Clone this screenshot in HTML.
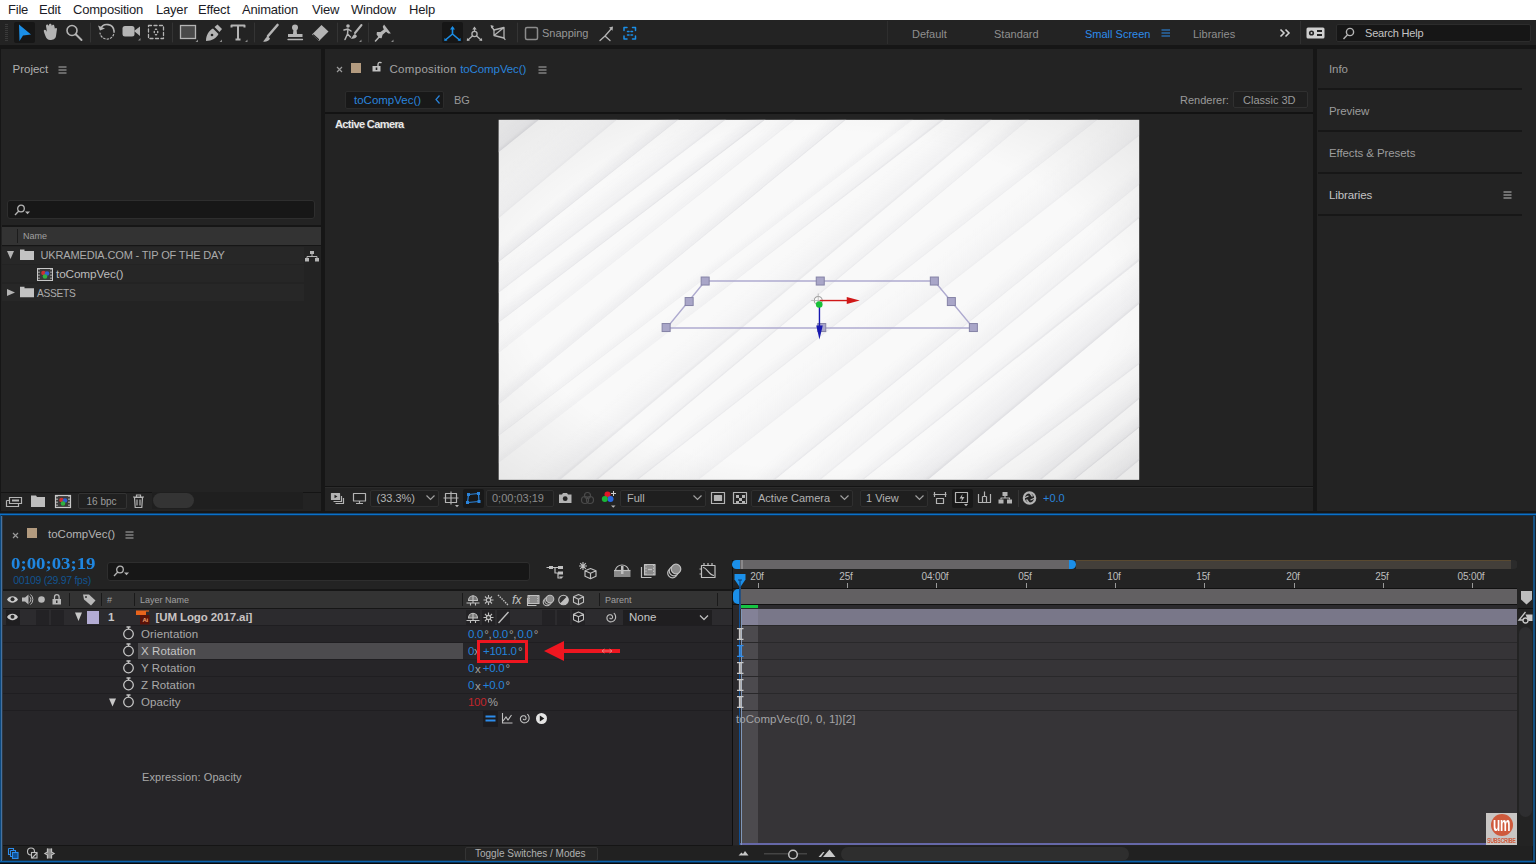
<!DOCTYPE html>
<html><head><meta charset="utf-8"><title>toCompVec()</title>
<style>
*{box-sizing:border-box;margin:0;padding:0}
html,body{width:1536px;height:864px;overflow:hidden;background:#161616}
body{font-family:"Liberation Sans",sans-serif;font-size:11px;color:#a7a7a7;position:relative}
.a{position:absolute}
.t{position:absolute;white-space:nowrap;line-height:1}
svg{position:absolute;overflow:visible}
#menu{left:0;top:0;width:1536px;height:20px;background:#fff}
#menu .t{top:3px;font-size:13px;color:#1b1b26;letter-spacing:-0.2px}
#tool{left:0;top:20px;width:1536px;height:25px;background:#232323}
.pn{background:#232323}
.bl{color:#2d8ceb}
.pr{font-size:11px;color:#ababab;letter-spacing:-0.150px}
.dd{top:441px;height:17px;background:#1f1f1f;border:1px solid #2f2f2f;border-radius:2px}
.ft{top:443.500px;font-size:11px;color:#b2b2b2}
.rp{font-size:11.500px;color:#9c9c9c;letter-spacing:-0.100px}
.rl{left:1px;width:204px;height:2px;background:#171717}
.pn2{font-size:11.500px;color:#a9a9a9;letter-spacing:0.100px}
.vl{font-size:11.500px;letter-spacing:-0.300px}
.sc{display:inline-block;width:8.200px;text-align:center;font-style:normal}
.ws{top:9px;font-size:11px;color:#8f8f8f}
.ws.bl{color:#2d8ceb}
</style></head><body>
<!-- MENU -->
<div id="menu" class="a">
<span class="t" style="left:8px">File</span><span class="t" style="left:39px">Edit</span><span class="t" style="left:73px">Composition</span><span class="t" style="left:156px">Layer</span><span class="t" style="left:198px">Effect</span><span class="t" style="left:242px">Animation</span><span class="t" style="left:312px">View</span><span class="t" style="left:351px">Window</span><span class="t" style="left:409px">Help</span>
</div>
<!-- TOOLBAR -->
<div id="tool" class="a">
<div class="a" style="left:5px;top:4px;width:3px;height:18px;background:repeating-linear-gradient(#3a3a3a 0 1px,transparent 1px 2px)"></div>
<div class="a" style="left:14px;top:2px;width:21px;height:21px;background:#161616;border-radius:2px"></div>
<svg style="left:0;top:0" width="700" height="25" viewBox="0 20 700 25" fill="none" stroke="#b4b4b4" stroke-width="1.6" stroke-linecap="round" stroke-linejoin="round">
<!-- selection arrow -->
<path d="M19 24.5 L31 34.5 L23 35.5 L19.5 41 Z" fill="#1b8fe8" stroke="none"/>
<!-- hand -->
<path d="M44 32 C43 29 46 29 47 32 L46 26 C46 24 48.5 24 48.5 26 L49 25 C49 23.3 51.5 23.3 51.5 25 L52 26 C52 24.3 54.3 24.3 54.3 26 L55 29 C55 27.5 57 27.5 57 29 L56 36 C55.5 39 53 40 50 40 C47 40 45.5 37 44 32 Z" fill="#b4b4b4" stroke="none"/>
<!-- zoom -->
<circle cx="72" cy="30.5" r="5"/><path d="M76 34.5 L81.5 40" stroke-width="2"/>
<path d="M90.5 23 V42 M172.5 23 V42 M254.5 23 V42 M337.5 23 V42 M368.5 23 V42 M517.5 23 V42" stroke="#343434" stroke-width="1"/>
<!-- rotate -->
<path d="M100.5 29 A7 7 0 0 1 114 31" /><path d="M98 25.5 L100 30.5 L105 28.5 Z" fill="#b4b4b4" stroke="none"/><path d="M114 31 A7 7 0 0 1 100 33" stroke-dasharray="1.5 2" stroke-width="1.2"/>
<!-- camera -->
<rect x="122.5" y="26" width="12" height="10.5" rx="2.5" fill="#b4b4b4" stroke="none"/><path d="M134 31 L140 26.5 V36 Z" fill="#b4b4b4" stroke="none"/><path d="M138 40.5 L140.5 38 V40.5 Z" fill="#8a8a8a" stroke="none"/>
<!-- pan behind -->
<rect x="148.500" y="25.500" width="15" height="13" stroke-dasharray="3 2.5" stroke-width="1.3"/><path d="M153 32 l2 -1.5 v3 Z M159 32 l-2 -1.500 v3 Z M156 28 l-1.5 2 h3 Z M156 36 l-1.5 -2 h3 Z" fill="#b4b4b4" stroke="none"/>
<!-- rect -->
<rect x="180.500" y="25.500" width="15" height="13" fill="#4a4a4a" stroke-width="1.300" stroke-linejoin="miter"/><path d="M195.500 42 L198 39.500 V42 Z M219.500 42 L222 39.500 V42 Z M245 42 L247.500 39.500 V42 Z M359 42 L361.500 39.500 V42 Z M391 42 L393.500 39.500 V42 Z" fill="#8a8a8a" stroke="none"/>
<!-- pen -->
<path d="M206 41 C206 35 209 30.500 213 28.500 L218.500 34 C216.500 38 212 41 206 41 Z M206.500 40.500 L211.500 35.500" fill="#b4b4b4" stroke="none"/><path d="M214.500 27 L217.500 24.500 L222 29 L219.500 32 Z" fill="#b4b4b4" stroke="none"/><circle cx="212" cy="35" r="1.300" fill="#232323" stroke="none"/>
<!-- T -->
<path d="M231.500 27.500 V25.500 H244.500 V27.500 M238 25.500 V39.500 M235.500 39.500 H240.500" stroke-width="2" stroke-linecap="butt"/>
<!-- brush -->
<path d="M277.500 25 L268 36" stroke-width="2.600"/><path d="M262.500 41.500 C265 41 265 37 268 36.500 L270 38.500 C269.500 41 266 42 262.500 41.500 Z" fill="#b4b4b4" stroke="none"/>
<!-- stamp -->
<circle cx="295" cy="27.500" r="3" fill="#b4b4b4" stroke="none"/><path d="M293.500 29 L293 34 H288 V37 H302.500 V34 H297 L296.500 29 Z" fill="#b4b4b4" stroke="none"/><path d="M288 39.500 H302.500" stroke-width="1.300"/>
<!-- eraser -->
<path d="M321.500 25 L328.500 31.500 L319 41 L312 34.500 Z" fill="#b4b4b4" stroke="none"/><path d="M313.500 35 L318.500 39.500" stroke="#232323" stroke-width="1.300"/>
<!-- roto -->
<circle cx="348" cy="26" r="1.800" fill="#b4b4b4" stroke="none"/><path d="M344 30 L348 29 L351 31 M348 29 L347.500 34 L345 39.500 M347.500 34 L350.500 37" stroke-width="1.500"/><path d="M361.500 25 L355 33" stroke-width="2"/><path d="M350.500 38.500 C352.500 38 352.500 35 355 34 L357 36 C356.500 38 353.500 39.500 350.500 38.500 Z" fill="#b4b4b4" stroke="none"/>
<!-- pin -->
<path d="M383 24.500 L391 32.500 L388.500 33 L386 31.500 L383 35 L382.500 38.500 L380 38.500 L377 35.500 L377 33 L380.500 32.500 L383.500 29.500 L382 27 Z" fill="#b4b4b4" stroke="none" transform="rotate(8 384 32)"/><path d="M380 36 L375.500 41" stroke-width="1.600"/>
</svg>
<div class="a" style="left:442px;top:2px;width:21px;height:21px;background:#161616;border-radius:2px"></div>
<svg style="left:0;top:0" width="700" height="25" viewBox="0 20 700 25" fill="none" stroke="#b4b4b4" stroke-width="1.300" stroke-linecap="round" stroke-linejoin="round">
<!-- axis local -->
<g stroke="#1b8fe8" fill="#1b8fe8"><path d="M452.500 34 V28 M452.500 34 L446 39.500 M452.500 34 L459 39.500" stroke-width="1.600"/><path d="M450 29.500 L452.500 26 L455 29.500 Z M444.500 38 L444.300 41 L447.500 40.500 Z M460.500 38 L460.700 41 L457.500 40.500 Z" stroke="none"/></g>
<!-- axis world -->
<path d="M474.500 34 V28 M474.500 34 L468.500 39.500 M474.500 34 L480.500 39.500"/><path d="M472.300 29.500 L474.500 26.500 L476.700 29.500 Z M467 38 L466.800 41 L470 40.500 Z M482 38 L482.200 41 L479 40.500 Z" fill="#b4b4b4" stroke="none"/><circle cx="474.500" cy="34" r="2.600" fill="#232323"/>
<!-- axis view -->
<path d="M494 30 L504 27.500 V38 L494 35.500 Z M494 35.500 L504 27.500"/><path d="M494 30 L491.500 26.500 M504 38 L505 39.500"/><path d="M490.500 25 L494 26 L491.500 28.500 Z" fill="#b4b4b4" stroke="none"/>
<!-- snapping -->
<rect x="525.500" y="27.500" width="12" height="12" rx="1.500" stroke="#8c8c8c" stroke-width="1.500"/>
<path d="M600 40.500 L605 36 L610 40.500 M605 36 L611.500 28.500"/><path d="M609 27.500 L613 26.500 L612.500 30.800 Z" fill="#b4b4b4" stroke="none"/>
<g stroke="#1b8fe8"><path d="M624 30.500 V27.500 H627 M632.500 27.500 H635.500 V30.500 M635.500 36 V39 H632.500 M627 39 H624 V36" stroke-width="1.500"/><path d="M627.500 31.500 h1.500 M631 31.500 h1.500 M627.500 35 h1.500 M631 35 h1.500" stroke-width="1.500"/></g>
</svg>
<span class="t" style="left:542px;top:8px;font-size:11px;color:#979797">Snapping</span>
<!-- workspace -->
<div class="a" style="left:887px;top:1px;width:1px;height:23px;background:#2e2e2e"></div><div class="a" style="left:1300px;top:1px;width:1px;height:23px;background:#303030"></div>
<span class="t ws" style="left:912px">Default</span><span class="t ws" style="left:994px">Standard</span><span class="t ws bl" style="left:1085px">Small Screen</span><span class="t ws" style="left:1193px">Libraries</span>
<svg style="left:1161px;top:9px" width="10" height="9" stroke="#2d8ceb" stroke-width="1"><path d="M0.500 1 H9 M0.500 4 H9 M0.500 7 H9"/></svg>
<svg style="left:1279px;top:8px" width="12" height="10" fill="none" stroke="#d0d0d0" stroke-width="1.600"><path d="M1.500 1.500 L5 5 L1.500 8.500 M6.500 1.500 L10 5 L6.500 8.500"/></svg>
<svg style="left:1306px;top:7px" width="20" height="13"><rect x="0.500" y="0.500" width="18" height="11" rx="1.500" fill="#cfcfcf"/><circle cx="5.500" cy="6" r="2.600" fill="#232323"/><circle cx="5.500" cy="6" r="1" fill="#cfcfcf"/><rect x="11" y="3" width="5" height="2" fill="#232323"/><rect x="11" y="7" width="5" height="2" fill="#232323"/></svg>
<div class="a" style="left:1336px;top:4px;width:195px;height:18px;background:#161616;border:1px solid #2c2c2c;border-radius:2px"></div>
<svg style="left:1342px;top:7px" width="14" height="13" fill="none" stroke="#b4b4b4" stroke-width="1.400"><circle cx="8" cy="5" r="3.600"/><path d="M5.500 7.800 L1.500 12"/></svg>
<span class="t" style="left:1365px;top:8px;font-size:11px;color:#c4c4c4;letter-spacing:-0.2px">Search Help</span>
</div>
<!-- PROJECT PANEL -->
<div id="proj" class="a pn" style="left:1px;top:49px;width:320px;height:462px">
<span class="t" style="left:11.500px;top:14.700px;font-size:11.500px;color:#b0b0b0">Project</span>
<svg style="left:57px;top:17px" width="10" height="9" stroke="#b0b0b0" stroke-width="1.200"><path d="M0.500 1 H8.500 M0.500 4 H8.500 M0.500 7 H8.500"/></svg>
<div class="a" style="left:6px;top:151px;width:308px;height:19px;background:#171717;border:1px solid #2e2e2e;border-radius:3px"></div>
<svg style="left:13px;top:155px" width="18" height="12" fill="none" stroke="#b4b4b4" stroke-width="1.300"><circle cx="7" cy="4.500" r="3.300"/><path d="M4.800 7 L1 11"/><path d="M11 7.500 h5 l-2.500 2.800 Z" fill="#b4b4b4" stroke="none"/></svg>
<div class="a" style="left:1px;top:176px;width:319px;height:21px;background:#161616"></div>
<div class="a" style="left:1px;top:178px;width:319px;height:18px;background:#333"></div>
<div class="a" style="left:16px;top:180px;width:1px;height:14px;background:#1c1c1c"></div>
<span class="t" style="left:22px;top:183px;font-size:9px;color:#a0a0a0">Name</span>
<div class="a" style="left:1px;top:198px;width:302px;height:17px;background:#272727"></div>
<div class="a" style="left:1px;top:216px;width:302px;height:17px;background:#262626"></div>
<div class="a" style="left:1px;top:235px;width:302px;height:17px;background:#272727"></div>
<svg style="left:0;top:196px" width="320" height="60" fill="#b4b4b4">
<path d="M6 6 h7 l-3.500 8 Z"/><path d="M6 44 v7 l8 -3.500 Z"/>
<path d="M19 4.500 h4.500 v1.500 h9.500 v9 h-14 Z M19 41.800 h4.500 v1.500 h9.500 v9 h-14 Z" fill="#c2c2c2"/>
<path d="M309 6 h4 v3 h-4 Z M304 13 h4 v3.500 h-4 Z M314 13 h4 v3.500 h-4 Z" /><path d="M311 9 v2.500 M306 13 v-1.500 h10 v1.500" fill="none" stroke="#b4b4b4" stroke-width="1"/>
<rect x="36.500" y="23.500" width="15" height="12" fill="#3a3a3a" stroke="#c8c8c8" stroke-width="1"/><path d="M38 23.500 v12 M50 23.500 v12" stroke="#c8c8c8" stroke-width="1" stroke-dasharray="1.500 1.500"/><circle cx="42.500" cy="28" r="2.300" fill="#d03030"/><circle cx="46" cy="28.500" r="2.300" fill="#3060d0"/><circle cx="44" cy="31.500" r="2.300" fill="#30b040"/>
</svg>
<span class="t pr" style="left:39.500px;top:201px">UKRAMEDIA.COM - TIP OF THE DAY</span>
<span class="t pr" style="left:55px;top:220px;font-size:11.800px;color:#bcbcbc">toCompVec()</span>
<span class="t pr" style="left:36px;top:240px;font-size:10.200px;letter-spacing:-0.300px">ASSETS</span>
<div class="a" style="left:0;top:443px;width:151px;height:1px;background:#141414"></div><div class="a" style="left:302px;top:443px;width:18px;height:1px;background:#141414"></div><div class="a" style="left:151px;top:443px;width:151px;height:17px;background:#1f1f1f"></div>
<svg style="left:0;top:443px" width="200" height="18" fill="none" stroke="#b4b4b4" stroke-width="1.200">
<path d="M8.500 5.500 h12 v6 h-12 Z M5.500 8.500 h3 M5.500 8.500 v6 h12 v-3" /><path d="M11 8.500 h7" stroke-width="2"/>
<path d="M30 3.500 h5 l1 1.500 h8 v10 h-14 Z" fill="#bdbdbd" stroke="none"/>
<rect x="54.500" y="3.500" width="15" height="12" fill="#3a3a3a" stroke="#c8c8c8"/><path d="M56 3.500 v12 M68 3.500 v12" stroke="#c8c8c8" stroke-dasharray="1.500 1.500"/><circle cx="60.500" cy="8" r="2.300" fill="#d03030" stroke="none"/><circle cx="64" cy="8.500" r="2.300" fill="#3060d0" stroke="none"/><circle cx="62" cy="11.500" r="2.300" fill="#30b040" stroke="none"/>
<path d="M133.500 5.500 h8 l-0.700 10 h-6.600 Z M132 5 h11 M135.500 4.500 v-1.500 h4 v1.500 M136 7.500 v6 M139 7.500 v6"/>
</svg>
<div class="a" style="left:77px;top:444px;width:49px;height:16px;border:1px solid #333;border-radius:2px;background:#202020"></div>
<span class="t" style="left:85.500px;top:447.500px;font-size:10px;color:#9c9c9c">16 bpc</span>
<div class="a" style="left:152px;top:444px;width:41px;height:15px;border-radius:8px;background:#343434"></div>
</div>
<!-- COMP PANEL -->
<div id="comp" class="a pn" style="left:325px;top:49px;width:988px;height:462px">
<svg style="left:10.500px;top:17px" width="7" height="7" stroke="#9a9a9a" stroke-width="1.200"><path d="M1 1 L6 6 M6 1 L1 6"/></svg>
<div class="a" style="left:26px;top:14px;width:10px;height:10px;background:#b39b7f"></div>
<svg style="left:46.500px;top:12px" width="10" height="11" fill="#c0c0c0"><path d="M0.500 5 h8 v5.500 h-8 Z"/><path d="M6 5 V3 a2 2 0 0 1 3.500 -1" fill="none" stroke="#c0c0c0" stroke-width="1.300"/><rect x="3.700" y="6.500" width="1.600" height="2.500" fill="#232323"/></svg>
<span class="t" style="left:64.500px;top:15.200px;font-size:11.500px;color:#a3a3a3;letter-spacing:0.300px">Composition <span class="bl" style="color:#2a84dc;letter-spacing:-0.100px">toCompVec()</span></span>
<svg style="left:213px;top:17px" width="10" height="9" stroke="#b0b0b0" stroke-width="1.200"><path d="M0.500 1 H8.500 M0.500 4 H8.500 M0.500 7 H8.500"/></svg>
<div class="a" style="left:20px;top:42px;width:99px;height:18px;background:#181818;border:1px solid #2b2b2b;border-radius:2px"></div>
<span class="t" style="left:29px;top:46px;font-size:11.500px;color:#2a84dc">toCompVec()</span>
<svg style="left:110px;top:46px" width="6" height="9" fill="none" stroke="#2a84dc" stroke-width="1.200"><path d="M4.500 0.500 L1 4.500 L4.500 8.500"/></svg>
<span class="t" style="left:129px;top:45.500px;font-size:11px;color:#9a9a9a">BG</span>
<span class="t" style="left:855px;top:45.500px;font-size:11px;color:#9a9a9a">Renderer:</span>
<div class="a" style="left:908px;top:42px;width:75px;height:17px;background:#1f1f1f;border:1px solid #303030;border-radius:2px"></div>
<span class="t" style="left:918px;top:45.500px;font-size:11px;color:#9a9a9a">Classic 3D</span>
<div class="a" style="left:0;top:63px;width:988px;height:2px;background:#131313"></div>
<span class="t" style="left:10px;top:70px;font-size:11px;font-weight:bold;color:#e8e8e8;letter-spacing:-0.600px;text-shadow:1px 1px 0 #444">Active Camera</span>
<svg style="left:173px;top:70px" width="643" height="362" viewBox="0 0 643 362"><g transform="translate(0.700 0.840) scale(1.00078 1)">
<defs><radialGradient id="vg" cx="50%" cy="50%" r="75%"><stop offset="0.620" stop-color="#000" stop-opacity="0"/><stop offset="1" stop-color="#000" stop-opacity="0.080"/></radialGradient>
<filter id="bl" filterUnits="userSpaceOnUse" x="-100" y="-100" width="900" height="600"><feGaussianBlur stdDeviation="2.500"/></filter><filter id="bl1" filterUnits="userSpaceOnUse" x="-100" y="-100" width="900" height="600"><feGaussianBlur stdDeviation="0.600"/></filter><linearGradient id="g0" gradientUnits="userSpaceOnUse" x1="100.4" y1="-92.5" x2="121.7" y2="-66.0"><stop offset="0" stop-color="#e6e6e9" stop-opacity="0"/><stop offset="0.900" stop-color="#e0e0e4" stop-opacity="0.50"/><stop offset="1" stop-color="#d4d4d9" stop-opacity="0.71"/></linearGradient><linearGradient id="g1" gradientUnits="userSpaceOnUse" x1="126.6" y1="-51.9" x2="148.4" y2="-25.8"><stop offset="0" stop-color="#e6e6e9" stop-opacity="0"/><stop offset="0.900" stop-color="#e0e0e4" stop-opacity="0.25"/><stop offset="1" stop-color="#d4d4d9" stop-opacity="0.36"/></linearGradient><linearGradient id="g2" gradientUnits="userSpaceOnUse" x1="169.7" y1="-9.7" x2="178.4" y2="1.3"><stop offset="0" stop-color="#e6e6e9" stop-opacity="0"/><stop offset="0.900" stop-color="#e0e0e4" stop-opacity="0.53"/><stop offset="1" stop-color="#d4d4d9" stop-opacity="0.76"/></linearGradient><linearGradient id="g3" gradientUnits="userSpaceOnUse" x1="185.3" y1="3.5" x2="198.7" y2="21.0"><stop offset="0" stop-color="#e6e6e9" stop-opacity="0"/><stop offset="0.900" stop-color="#e0e0e4" stop-opacity="0.36"/><stop offset="1" stop-color="#d4d4d9" stop-opacity="0.52"/></linearGradient><linearGradient id="g4" gradientUnits="userSpaceOnUse" x1="204.8" y1="28.9" x2="213.3" y2="40.0"><stop offset="0" stop-color="#e6e6e9" stop-opacity="0"/><stop offset="0.900" stop-color="#e0e0e4" stop-opacity="0.48"/><stop offset="1" stop-color="#d4d4d9" stop-opacity="0.68"/></linearGradient><linearGradient id="g5" gradientUnits="userSpaceOnUse" x1="214.8" y1="46.4" x2="223.5" y2="57.4"><stop offset="0" stop-color="#e6e6e9" stop-opacity="0"/><stop offset="0.900" stop-color="#e0e0e4" stop-opacity="0.30"/><stop offset="1" stop-color="#d4d4d9" stop-opacity="0.42"/></linearGradient><linearGradient id="g6" gradientUnits="userSpaceOnUse" x1="233.7" y1="74.9" x2="242.6" y2="85.7"><stop offset="0" stop-color="#e6e6e9" stop-opacity="0"/><stop offset="0.900" stop-color="#e0e0e4" stop-opacity="0.44"/><stop offset="1" stop-color="#d4d4d9" stop-opacity="0.63"/></linearGradient><linearGradient id="g7" gradientUnits="userSpaceOnUse" x1="261.7" y1="103.7" x2="267.8" y2="111.7"><stop offset="0" stop-color="#e6e6e9" stop-opacity="0"/><stop offset="0.900" stop-color="#e0e0e4" stop-opacity="0.31"/><stop offset="1" stop-color="#d4d4d9" stop-opacity="0.44"/></linearGradient><linearGradient id="g8" gradientUnits="userSpaceOnUse" x1="271.1" y1="116.7" x2="279.7" y2="127.7"><stop offset="0" stop-color="#e6e6e9" stop-opacity="0"/><stop offset="0.900" stop-color="#e0e0e4" stop-opacity="0.34"/><stop offset="1" stop-color="#d4d4d9" stop-opacity="0.48"/></linearGradient><linearGradient id="g9" gradientUnits="userSpaceOnUse" x1="284.1" y1="137.0" x2="302.0" y2="158.5"><stop offset="0" stop-color="#e6e6e9" stop-opacity="0"/><stop offset="0.900" stop-color="#e0e0e4" stop-opacity="0.30"/><stop offset="1" stop-color="#d4d4d9" stop-opacity="0.43"/></linearGradient><linearGradient id="g10" gradientUnits="userSpaceOnUse" x1="308.5" y1="166.2" x2="317.4" y2="176.9"><stop offset="0" stop-color="#e6e6e9" stop-opacity="0"/><stop offset="0.900" stop-color="#e0e0e4" stop-opacity="0.34"/><stop offset="1" stop-color="#d4d4d9" stop-opacity="0.48"/></linearGradient><linearGradient id="g11" gradientUnits="userSpaceOnUse" x1="329.9" y1="192.6" x2="338.5" y2="203.6"><stop offset="0" stop-color="#e6e6e9" stop-opacity="0"/><stop offset="0.900" stop-color="#e0e0e4" stop-opacity="0.33"/><stop offset="1" stop-color="#d4d4d9" stop-opacity="0.47"/></linearGradient><linearGradient id="g12" gradientUnits="userSpaceOnUse" x1="344.6" y1="211.5" x2="361.9" y2="233.6"><stop offset="0" stop-color="#e6e6e9" stop-opacity="0"/><stop offset="0.900" stop-color="#e0e0e4" stop-opacity="0.25"/><stop offset="1" stop-color="#d4d4d9" stop-opacity="0.35"/></linearGradient><linearGradient id="g13" gradientUnits="userSpaceOnUse" x1="379.2" y1="253.0" x2="390.5" y2="267.0"><stop offset="0" stop-color="#e6e6e9" stop-opacity="0"/><stop offset="0.900" stop-color="#e0e0e4" stop-opacity="0.34"/><stop offset="1" stop-color="#d4d4d9" stop-opacity="0.49"/></linearGradient><linearGradient id="g14" gradientUnits="userSpaceOnUse" x1="395.0" y1="271.1" x2="409.0" y2="288.1"><stop offset="0" stop-color="#e6e6e9" stop-opacity="0"/><stop offset="0.900" stop-color="#e0e0e4" stop-opacity="0.30"/><stop offset="1" stop-color="#d4d4d9" stop-opacity="0.43"/></linearGradient><linearGradient id="g15" gradientUnits="userSpaceOnUse" x1="415.7" y1="300.7" x2="424.4" y2="311.6"><stop offset="0" stop-color="#e6e6e9" stop-opacity="0"/><stop offset="0.900" stop-color="#e0e0e4" stop-opacity="0.33"/><stop offset="1" stop-color="#d4d4d9" stop-opacity="0.47"/></linearGradient><linearGradient id="g16" gradientUnits="userSpaceOnUse" x1="431.4" y1="313.6" x2="453.2" y2="339.8"><stop offset="0" stop-color="#e6e6e9" stop-opacity="0"/><stop offset="0.900" stop-color="#e0e0e4" stop-opacity="0.51"/><stop offset="1" stop-color="#d4d4d9" stop-opacity="0.73"/></linearGradient><linearGradient id="g17" gradientUnits="userSpaceOnUse" x1="453.8" y1="357.2" x2="467.0" y2="374.7"><stop offset="0" stop-color="#e6e6e9" stop-opacity="0"/><stop offset="0.900" stop-color="#e0e0e4" stop-opacity="0.36"/><stop offset="1" stop-color="#d4d4d9" stop-opacity="0.52"/></linearGradient><linearGradient id="g18" gradientUnits="userSpaceOnUse" x1="484.2" y1="379.0" x2="498.2" y2="396.0"><stop offset="0" stop-color="#e6e6e9" stop-opacity="0"/><stop offset="0.900" stop-color="#e0e0e4" stop-opacity="0.47"/><stop offset="1" stop-color="#d4d4d9" stop-opacity="0.67"/></linearGradient><linearGradient id="g19" gradientUnits="userSpaceOnUse" x1="499.5" y1="402.7" x2="508.3" y2="413.6"><stop offset="0" stop-color="#e6e6e9" stop-opacity="0"/><stop offset="0.900" stop-color="#e0e0e4" stop-opacity="0.48"/><stop offset="1" stop-color="#d4d4d9" stop-opacity="0.69"/></linearGradient><linearGradient id="g20" gradientUnits="userSpaceOnUse" x1="515.8" y1="415.1" x2="529.9" y2="432.0"><stop offset="0" stop-color="#e6e6e9" stop-opacity="0"/><stop offset="0.900" stop-color="#e0e0e4" stop-opacity="0.41"/><stop offset="1" stop-color="#d4d4d9" stop-opacity="0.58"/></linearGradient><linearGradient id="g21" gradientUnits="userSpaceOnUse" x1="538.4" y1="443.2" x2="549.9" y2="457.1"><stop offset="0" stop-color="#e6e6e9" stop-opacity="0"/><stop offset="0.900" stop-color="#e0e0e4" stop-opacity="0.28"/><stop offset="1" stop-color="#d4d4d9" stop-opacity="0.40"/></linearGradient><clipPath id="cv"><rect width="640" height="360"/></clipPath></defs>
<rect width="640" height="360" fill="#f9f9f9"/>
<g clip-path="url(#cv)"><g filter="url(#bl1)"><polygon points="-523,410 723,-595 745,-568 -501,436" fill="url(#g0)"/><polygon points="-488,460 741,-564 763,-538 -466,487" fill="url(#g1)"/><polygon points="-457,487 797,-507 805,-496 -449,498" fill="url(#g2)"/><polygon points="-451,489 821,-482 835,-464 -437,506" fill="url(#g3)"/><polygon points="-431,514 841,-456 850,-445 -423,525" fill="url(#g4)"/><polygon points="-414,541 843,-449 852,-438 -405,552" fill="url(#g5)"/><polygon points="-385,583 852,-433 861,-422 -376,593" fill="url(#g6)"/><polygon points="-374,589 897,-382 903,-374 -368,597" fill="url(#g7)"/><polygon points="-362,605 905,-372 913,-361 -354,616" fill="url(#g8)"/><polygon points="-330,650 898,-376 916,-354 -312,672" fill="url(#g9)"/><polygon points="-305,679 922,-347 931,-336 -296,690" fill="url(#g10)"/><polygon points="-300,686 960,-301 968,-290 -291,697" fill="url(#g11)"/><polygon points="-286,704 975,-281 992,-259 -269,726" fill="url(#g12)"/><polygon points="-242,757 1001,-251 1012,-237 -231,771" fill="url(#g13)"/><polygon points="-223,779 1013,-237 1027,-220 -209,796" fill="url(#g14)"/><polygon points="-211,798 1042,-196 1051,-185 -202,809" fill="url(#g15)"/><polygon points="-183,826 1046,-199 1068,-173 -161,852" fill="url(#g16)"/><polygon points="-185,839 1092,-125 1105,-107 -171,857" fill="url(#g17)"/><polygon points="-133,888 1101,-130 1115,-113 -119,905" fill="url(#g18)"/><polygon points="-123,905 1122,-99 1131,-88 -115,916" fill="url(#g19)"/><polygon points="-99,927 1131,-97 1145,-80 -85,944" fill="url(#g20)"/><polygon points="-77,954 1154,-68 1166,-54 -66,968" fill="url(#g21)"/></g></g>
<rect width="640" height="360" fill="url(#vg)"/>
<g transform="translate(0.800 0.700)"><g fill="none" stroke="#aeaacf" stroke-width="1.400"><path d="M205.500 160.500 H434.500 L473.500 207.500 H167 Z"/></g>
<g fill="#a9a6c8" stroke="#8583a6" stroke-width="1"><rect x="201.500" y="156.500" width="8" height="8"/><rect x="316.500" y="156.500" width="8" height="8"/><rect x="430.500" y="156.500" width="8" height="8"/><rect x="185.500" y="177" width="8" height="8"/><rect x="447.500" y="177" width="8" height="8"/><rect x="162.500" y="203" width="8" height="8"/><rect x="318" y="203" width="8" height="8"/><rect x="469.500" y="203" width="8" height="8"/></g>
<circle cx="318.500" cy="180" r="4" fill="none" stroke="#9a9a9a" stroke-width="1"/><path d="M318.500 173 v14 M311.500 180 h14" stroke="#b0b0b0" stroke-width="0.800"/>
<path d="M320 180 H350" stroke="#d01818" stroke-width="1.400"/><path d="M347 176.500 L360 180 L347 183.500 Z" fill="#d01818"/>
<path d="M319.700 185 V208" stroke="#1818b0" stroke-width="1.400"/><path d="M316.500 205 L319.700 219 L323 205 Z" fill="#1818b0"/>
<circle cx="319.500" cy="184" r="3.300" fill="#18c038"/></g>
</g></svg>
<div class="a" style="left:0;top:437px;width:988px;height:1px;background:#131313"></div>
<div class="a" style="left:0;top:438px;width:988px;height:1px;background:#2b2b2b"></div>
<div class="a dd" style="left:45px;width:69px"></div><span class="t ft" style="left:51.5px">(33.3%)</span><svg style="left:101px;top:446px" width="9" height="6" fill="none" stroke="#a0a0a0" stroke-width="1.200"><path d="M0.500 0.500 L4.500 4.500 L8.500 0.500"/></svg><div class="a dd" style="left:161px;width:68px"></div><span class="t ft" style="left:167px"><span style="color:#8c8c8c">0;00;03;19</span></span><div class="a dd" style="left:295px;width:86px"></div><span class="t ft" style="left:302px">Full</span><svg style="left:368px;top:446px" width="9" height="6" fill="none" stroke="#a0a0a0" stroke-width="1.200"><path d="M0.500 0.500 L4.500 4.500 L8.500 0.500"/></svg><div class="a dd" style="left:426px;width:102px"></div><span class="t ft" style="left:433px">Active Camera</span><svg style="left:515px;top:446px" width="9" height="6" fill="none" stroke="#a0a0a0" stroke-width="1.200"><path d="M0.500 0.500 L4.500 4.500 L8.500 0.500"/></svg><div class="a dd" style="left:535px;width:68px"></div><span class="t ft" style="left:541px">1 View</span><svg style="left:590px;top:446px" width="9" height="6" fill="none" stroke="#a0a0a0" stroke-width="1.200"><path d="M0.500 0.500 L4.500 4.500 L8.500 0.500"/></svg><div class="a" style="left:138px;top:440px;width:21px;height:19px;background:#181818;border-radius:2px"></div>
<div class="a" style="left:627px;top:440px;width:21px;height:19px;background:#181818;border-radius:2px"></div>
<div class="a" style="left:693px;top:441px;width:1px;height:17px;background:#353535"></div>
<svg style="left:0;top:438px" width="760" height="23" viewBox="325 487 760 23" fill="none" stroke="#b4b4b4" stroke-width="1.200" stroke-linejoin="round">
<path d="M331.500 493.500 h8 v6 h-8 Z" fill="#b4b4b4"/><path d="M334.500 494.800 v3.400 l3 -1.700 Z" fill="#232323" stroke="none"/><path d="M341.500 496 v5.500 h-8 M343.500 498 v5.500 h-8"/>
<path d="M353.500 493.500 h12 v7.500 h-12 Z M356 503.500 h7 M359.500 501 v2.500"/>
<path d="M445.500 493.500 h11 v9 h-11 Z M451 491.500 v13 M443.500 498 h15"/><path d="M455 505 h4 l-2 2.300 Z" fill="#b4b4b4" stroke="none"/>
<g stroke="#2a84dc"><path d="M468.500 494.500 L478.500 493.500 L479 501.500 L467.500 502.500 Z"/><path d="M467 493 h3 v3 h-3 Z M477 492 h3 v3 h-3 Z M477.500 500 h3 v3 h-3 Z M466 501 h3 v3 h-3 Z" fill="#2a84dc" stroke="none"/></g>
<path d="M559 494.500 h3 l1 -1.500 h4 l1 1.500 h3.500 v8.500 h-12.500 Z" fill="#b4b4b4" stroke="none"/><circle cx="565.200" cy="498.700" r="2.400" fill="#232323" stroke="none"/>
<g stroke="#4a4a4a"><circle cx="585" cy="500" r="3.500"/><circle cx="590" cy="500" r="3.500"/><circle cx="587.500" cy="495.500" r="3"/></g>
<circle cx="607.500" cy="494.500" r="3" fill="#e01828" stroke="none"/><circle cx="610.500" cy="499" r="3" fill="#2868e0" stroke="none"/><circle cx="604.800" cy="499" r="3" fill="#18b838" stroke="none"/><path d="M613.500 491 v5 M611 493.500 h5" stroke="#d0d0d0" stroke-width="1"/><path d="M611 505.500 h4.500 l-2.250 2.300 Z" fill="#b4b4b4" stroke="none"/>
<path d="M711.500 492.500 h13 v11 h-13 Z"/><path d="M714.500 495.500 h7 v5 h-7 Z" fill="#b4b4b4"/>
<path d="M733.500 492.500 h13 v11 h-13 Z"/><path d="M736 495 h3 v3 h-3 Z M742 495 h3 v3 h-3 Z M739 498 h3 v3 h-3 Z M736 501 h3 v2 h-3 Z M742 501 h3 v2 h-3 Z" fill="#b4b4b4" stroke="none"/>
<path d="M933.500 494.500 h13 M934.500 492 v5 M945.500 492 v5 M936.500 498.500 h7 v5 h-7 Z"/>
<path d="M955.500 492.500 h12 v10 h-12 Z"/><path d="M962.500 494 l-3 4.500 h2.500 l-1 3.500 l3.500 -5 h-2.500 Z" fill="#b4b4b4" stroke="none"/><path d="M964 504 h4 l-2 2.300 Z" fill="#b4b4b4" stroke="none"/>
<path d="M978.500 494 v8.500 h12 v-8.500 M982.500 496.500 v6 M986.500 496.500 v6 M984.500 491.500 v5 M982.500 496.500 h4"/>
<path d="M1002.500 492 h5 v4 h-5 Z M998.500 499.500 h5 v4 h-5 Z M1007 499.500 h5 v4 h-5 Z" fill="#b4b4b4" stroke="none"/><path d="M1005 496 v2 M1001 499.500 v-1.500 h8.500 v1.500"/>
<circle cx="1029.500" cy="498" r="5.700" stroke-width="2.200"/><path d="M1029.500 492.500 l3 4 M1035 498 l-4.500 2 M1029.500 503.500 l-3 -4 M1024 498 l4.500 -2" stroke-width="1.300"/>
</svg>
<span class="t ft" style="left:718px;color:#2a84dc">+0.0</span>
</div>
<!-- RIGHT PANEL -->
<div id="right" class="a pn" style="left:1317px;top:49px;width:219px;height:462px">
<span class="t rp" style="left:12px;top:15px">Info</span><div class="a rl" style="top:39px"></div>
<span class="t rp" style="left:12px;top:57px">Preview</span><div class="a rl" style="top:81px"></div>
<span class="t rp" style="left:12px;top:99px">Effects &amp; Presets</span><div class="a rl" style="top:123px"></div>
<span class="t rp" style="left:12px;top:141px;color:#c4c4c4">Libraries</span><div class="a rl" style="top:165px"></div>
<svg style="left:186px;top:142px" width="10" height="9" stroke="#c0c0c0" stroke-width="1.200"><path d="M0.500 1 H8.500 M0.500 4 H8.500 M0.500 7 H8.500"/></svg>
</div>
<!-- TIMELINE -->
<div id="tl" class="a" style="left:0;top:0;width:1536px;height:864px;pointer-events:none">
<div class="a" style="left:0;top:513px;width:1536px;height:1px;background:#104370"></div><div class="a" style="left:0;top:514px;width:1536px;height:1px;background:#0a70c9"></div><div class="a" style="left:0;top:515px;width:1536px;height:1px;background:#12314c"></div><div class="a" style="left:0;top:860px;width:1536px;height:1px;background:#1b3448"></div><div class="a" style="left:0;top:861px;width:1536px;height:1px;background:#0c62ac"></div><div class="a" style="left:0;top:862px;width:1536px;height:1px;background:#063156"></div>
<div class="a" style="left:0;top:515px;width:1px;height:346px;background:#0c4a80"></div><div class="a" style="left:1px;top:516px;width:1px;height:345px;background:#4672a0"></div>
<div class="a" style="left:1532px;top:516px;width:1px;height:345px;background:#183548"></div><div class="a" style="left:1533px;top:516px;width:2px;height:345px;background:#155182"></div><div class="a" style="left:1535px;top:516px;width:1px;height:348px;background:#14222e"></div>
<div class="a" style="left:2px;top:516px;width:1531px;height:344px;background:#161616"></div><div class="a" style="left:2px;top:516px;width:1px;height:344px;background:#2e3741;z-index:3"></div>
<div class="a" style="left:0;top:863px;width:1536px;height:1px;background:#0a0a0a"></div>
<!-- top area -->
<div class="a" style="left:2px;top:516px;width:1531px;height:73px;background:#232323"></div>
<svg style="left:12px;top:532px" width="7" height="7" stroke="#9a9a9a" stroke-width="1.200"><path d="M1 1 L6 6 M6 1 L1 6"/></svg>
<div class="a" style="left:27px;top:528px;width:10px;height:10px;background:#b39b7f"></div>
<span class="t" style="left:48px;top:529px;font-size:11.500px;color:#b4b4b4">toCompVec()</span>
<svg style="left:125px;top:531px" width="10" height="9" stroke="#b0b0b0" stroke-width="1.200"><path d="M0.500 1 H8.500 M0.500 4 H8.500 M0.500 7 H8.500"/></svg>
<span class="t" id="tc" style="left:11px;top:555.300px;font-size:17px;font-weight:bold;color:#1f86e0;font-family:'Liberation Serif',serif;transform:scaleX(1.105);transform-origin:0 0">0;00;03;19</span>
<span class="t" style="left:13.300px;top:575px;font-size:10.500px;color:#12538f;letter-spacing:-0.280px">00109 (29.97 fps)</span>
<div class="a" style="left:107px;top:562px;width:423px;height:19px;background:#171717;border:1px solid #2e2e2e;border-radius:3px"></div>
<svg style="left:113px;top:565px" width="18" height="12" fill="none" stroke="#b4b4b4" stroke-width="1.300"><circle cx="7" cy="4.500" r="3.300"/><path d="M4.800 7 L1 11"/><path d="M11 7.500 h5 l-2.500 2.800 Z" fill="#b4b4b4" stroke="none"/></svg>
<!-- left pane -->
<div class="a" style="left:2px;top:591px;width:730px;height:17px;background:#333"></div>
<div class="a" style="left:2px;top:609px;width:730px;height:236px;background:#262528"></div>
<div class="a" style="left:2px;top:625px;width:730px;height:1px;background:#1f1e21"></div><div class="a" style="left:2px;top:642px;width:730px;height:1px;background:#1f1e21"></div><div class="a" style="left:2px;top:659px;width:730px;height:1px;background:#1f1e21"></div><div class="a" style="left:2px;top:676px;width:730px;height:1px;background:#1f1e21"></div><div class="a" style="left:2px;top:693px;width:730px;height:1px;background:#1f1e21"></div><div class="a" style="left:2px;top:710px;width:730px;height:1px;background:#1f1e21"></div><div class="a" style="left:2px;top:609px;width:730px;height:16px;background:#2c2b2e"></div><div class="a" style="left:138px;top:643px;width:325px;height:16px;background:#4c4b4e"></div><div class="a" style="left:69px;top:593px;width:1px;height:13px;background:#1a1a1a"></div><div class="a" style="left:101px;top:593px;width:1px;height:13px;background:#1a1a1a"></div><div class="a" style="left:134px;top:593px;width:1px;height:13px;background:#1a1a1a"></div><div class="a" style="left:462px;top:593px;width:1px;height:13px;background:#1a1a1a"></div><div class="a" style="left:599px;top:593px;width:1px;height:13px;background:#1a1a1a"></div><div class="a" style="left:717px;top:593px;width:1px;height:13px;background:#1a1a1a"></div><span class="t" style="left:107px;top:596px;font-size:9px;color:#a0a0a0">#</span><span class="t" style="left:140px;top:596px;font-size:9px;color:#a0a0a0">Layer Name</span><span class="t" style="left:605px;top:596px;font-size:9px;color:#a0a0a0">Parent</span><svg style="left:0;top:589px" width="732" height="40" viewBox="0 589 732 40" fill="none" stroke="#b8b8b8" stroke-width="1.200" stroke-linejoin="round">
<g id="eye"><path d="M7 599.500 C9.500 595.300 15.500 595.300 18 599.500 C15.500 603.700 9.500 603.700 7 599.500 Z" fill="#cacaca" stroke="none"/><circle cx="12.500" cy="599.300" r="2" fill="#2a2a2a" stroke="none"/></g>
<path d="M22 597.500 h3 l3.500 -3 v10 l-3.500 -3 h-3 Z" fill="#b8b8b8" stroke="none"/><path d="M29.500 596.500 a4 4 0 0 1 0 6 M30.500 594.500 a6.500 6.500 0 0 1 0 10" stroke-width="1"/>
<circle cx="41.500" cy="599.500" r="3.300" fill="#b8b8b8" stroke="none"/>
<path d="M52.500 599 h8.500 v5.500 h-8.500 Z" fill="#b8b8b8" stroke="none"/><path d="M54.500 599 v-2 a2.300 2.300 0 0 1 4.600 0 v2" stroke-width="1.300"/><rect x="56" y="600.500" width="1.500" height="2.500" fill="#333" stroke="none"/>
<path d="M83 594.500 h6 l6.500 6 l-4.500 5 l-7 -6 Z" fill="#b8b8b8" stroke="none"/><circle cx="86" cy="597" r="1" fill="#333" stroke="none"/>
<!-- layer row eye -->
<rect x="6" y="610" width="14" height="15" fill="#1f1e20" stroke="none"/><rect x="36" y="610" width="13" height="15" fill="#232225" stroke="none"/><rect x="51" y="610" width="13" height="15" fill="#232225" stroke="none"/>
<use href="#eye" y="17.500"/>
<path d="M75 612.500 h7 l-3.500 8.500 Z" fill="#c8c8c8" stroke="none"/>
<rect x="87" y="611" width="12" height="13" fill="#b3acd4" stroke="none"/>
<!-- AI icon -->
<rect x="136" y="610.500" width="10" height="4.500" fill="#e8641c" stroke="none"/><rect x="140" y="615" width="9.500" height="9.500" fill="#5a1208" stroke="none"/><path d="M146 611 h3" stroke="#e8641c"/>
</svg>
<span class="t" style="left:142.500px;top:616.500px;font-size:6px;font-weight:bold;color:#f0a070;letter-spacing:-0.300px">Ai</span>
<span class="t" style="left:108px;top:612px;font-size:11.500px;font-weight:bold;color:#c8c8c8">1</span>
<span class="t" style="left:155.500px;top:612px;font-size:11.500px;font-weight:bold;color:#c9c3c3;letter-spacing:-0.100px">[UM Logo 2017.ai]</span>
<svg style="left:122px;top:626px" width="13" height="14" fill="none" stroke="#c4c4c4" stroke-width="1.300"><circle cx="6.500" cy="8" r="4.800"/><path d="M4.500 1 h4 M6.500 1 v2.200"/></svg><span class="t pn2" style="left:141px;top:629.0px">Orientation</span><svg style="left:122px;top:643px" width="13" height="14" fill="none" stroke="#c4c4c4" stroke-width="1.300"><circle cx="6.500" cy="8" r="4.800"/><path d="M4.500 1 h4 M6.500 1 v2.200"/></svg><span class="t pn2" style="left:141px;top:646.0px;color:#c6c6c6">X Rotation</span><svg style="left:122px;top:660px" width="13" height="14" fill="none" stroke="#c4c4c4" stroke-width="1.300"><circle cx="6.500" cy="8" r="4.800"/><path d="M4.500 1 h4 M6.500 1 v2.200"/></svg><span class="t pn2" style="left:141px;top:663.0px">Y Rotation</span><svg style="left:122px;top:677px" width="13" height="14" fill="none" stroke="#c4c4c4" stroke-width="1.300"><circle cx="6.500" cy="8" r="4.800"/><path d="M4.500 1 h4 M6.500 1 v2.200"/></svg><span class="t pn2" style="left:141px;top:680.0px">Z Rotation</span><svg style="left:122px;top:694px" width="13" height="14" fill="none" stroke="#c4c4c4" stroke-width="1.300"><circle cx="6.500" cy="8" r="4.800"/><path d="M4.500 1 h4 M6.500 1 v2.200"/></svg><span class="t pn2" style="left:141px;top:697.0px">Opacity</span><svg style="left:109px;top:698px" width="8" height="9"><path d="M0 0.500 h7 l-3.500 8 Z" fill="#c8c8c8"/></svg><span class="t pn2" style="left:142px;top:771.500px;font-size:11px">Expression: Opacity</span>
<svg style="left:540px;top:560px" width="190" height="22" viewBox="540 560 190 22" fill="none" stroke="#c0c0c0" stroke-width="1.200" stroke-linejoin="round">
<path d="M546.500 567.500 h16 M555 567.500 v5.500 h7 M558 573 v5 h3" /><rect x="549" y="566" width="4" height="3" fill="#c0c0c0" stroke="none"/><rect x="558" y="566" width="5" height="3" fill="#c0c0c0" stroke="none"/><rect x="558" y="571.500" width="5" height="3" fill="#c0c0c0" stroke="none"/><path d="M559 576.500 h4.500 l-2.250 2.300 Z" fill="#c0c0c0" stroke="none"/>
<path d="M583 562 v8 M579 566 h8 M580.200 563.200 l5.600 5.600 M585.800 563.200 l-5.600 5.600" stroke-width="1.100"/><path d="M590.500 568.500 l5.500 2.300 v5.500 l-5.500 2.500 l-5.500 -2.500 v-5.500 Z M585 570.800 l5.500 2.400 l5.500 -2.400 M590.500 573.200 v5.600" fill="#232323"/>
<rect x="614" y="571" width="16.500" height="6" fill="#8a8a8a" stroke="none"/><path d="M615.500 570.500 a6.500 5.500 0 0 1 13 0 Z" /><path d="M621 566 h2.500 v8 h-2.500 Z" fill="#c0c0c0" stroke="none"/><path d="M614 570.500 h16.500"/>
<path d="M641.500 567 v10.500 h10" /><rect x="644.500" y="564.500" width="10.500" height="10.500" fill="#8a8a8a"/><path d="M646 564.500 v10.500 M653.500 564.500 v10.500" stroke-dasharray="1.500 1.500" stroke-width="1"/><path d="M648 569.500 h4" stroke-width="1.300"/>
<circle cx="672.500" cy="573" r="4.800"/><circle cx="674" cy="571" r="4.800" fill="#232323"/><circle cx="676" cy="569" r="4.800" fill="#8a8a8a"/>
<rect x="701.500" y="565.500" width="13.500" height="12"/><path d="M704 565 v-2 M708 565 v-2 M712 565 v-2 M701 569 h-1.500 M701 574 h-1.500"/><path d="M703 567.500 c4 0 6 8 11 8"/>
</svg>
<svg style="left:460px;top:589px" width="272" height="40" viewBox="460 589 272 40" fill="none" stroke="#c0c0c0" stroke-width="1.100" stroke-linejoin="round">
<rect x="466" y="610" width="14" height="15" fill="#232225" stroke="none"/><rect x="482" y="610" width="13" height="15" fill="#232225" stroke="none"/><rect x="497" y="610" width="13" height="15" fill="#232225" stroke="none"/>
<rect x="542" y="610" width="13" height="15" fill="#232225" stroke="none"/><rect x="557" y="610" width="13" height="15" fill="#232225" stroke="none"/><rect x="572" y="610" width="13" height="15" fill="#232225" stroke="none"/>
<g id="shy"><path d="M468.500 600.500 a4.500 4.800 0 0 1 9 0 Z" fill="#777"/><path d="M466.500 603 h13 M470.500 603 v2.500 M475.500 603 v2.500 M473 595.500 v7" stroke-width="1.100"/></g>
<g id="sun"><circle cx="488.500" cy="600" r="2.100" fill="#333"/><path d="M488.500 595 v2.600 M488.500 602.400 v2.600 M483.500 600 h2.600 M490.900 600 h2.600 M485 596.500 l1.800 1.800 M490.200 601.700 l1.800 1.800 M492 596.500 l-1.800 1.800 M486.800 601.700 l-1.800 1.800" stroke-width="1.100"/></g>
<path d="M498 595 l10 10" stroke-dasharray="1.500 1" stroke-width="1.400"/>
<path d="M528 595.500 h11 v8 h-11 Z" fill="#8a8a8a"/><path d="M527.500 598 v7.500 h9"/><path d="M529.500 595.500 v8 M537.500 595.500 v8" stroke-dasharray="1.200 1.200" stroke-width="0.900"/>
<circle cx="547" cy="602" r="3.800" /><circle cx="548.500" cy="600.500" r="3.800" fill="#333"/><circle cx="550" cy="599" r="3.800" fill="#8a8a8a"/>
<circle cx="563.500" cy="600" r="4.800"/><path d="M560.100 603.400 a4.800 4.800 0 0 0 6.800 -6.800 Z" fill="#c0c0c0" stroke="none"/>
<g id="cube"><path d="M578.500 594.500 l5 2.300 v5.500 l-5 2.500 l-5 -2.500 v-5.500 Z M573.500 596.800 l5 2.400 l5 -2.400 M578.500 599.200 v5.600"/></g>
<use href="#shy" y="17.500"/><use href="#sun" y="17.500"/><path d="M498.500 623 l10 -11" stroke-width="1.300"/><use href="#cube" y="17.500"/>
<path d="M609.9 617.7 L609.9 617.9 L609.9 618.1 L610.0 618.4 L610.2 618.6 L610.5 618.7 L610.8 618.8 L611.2 618.8 L611.6 618.7 L612.0 618.4 L612.3 618.1 L612.5 617.6 L612.6 617.1 L612.5 616.6 L612.3 616.0 L612.0 615.5 L611.5 615.1 L610.8 614.8 L610.1 614.7 L609.4 614.7 L608.7 615.0 L608.0 615.4 L607.5 616.1 L607.1 616.8 L606.9 617.7 L607.0 618.7 L607.2 619.6 L607.8 620.4 L608.5 621.1 L609.4 621.6 L610.5 621.9 L611.6 621.8 L612.7 621.5 L613.7 620.9 L614.6 620.1 L615.2 619.0 L615.6 617.8 L615.6 616.5 L615.3 615.2 L614.7 614.0 L613.8 613.0" stroke-width="1.100"/>
<rect x="623" y="610" width="89" height="15" fill="#1f1e20" stroke="none"/>
<path d="M700 615.500 L704 619.500 L708 615.500" stroke-width="1.200"/>
</svg>
<span class="t" style="left:512px;top:594px;font-size:12.500px;font-style:italic;color:#c0c0c0;letter-spacing:-0.300px">fx</span>
<span class="t" style="left:629px;top:612px;font-size:11.500px;color:#c6c6c6">None</span>
<span class="t vl" style="left:468px;top:629px"><span style="color:#2383dc">0.0</span><span style="color:#a0a0a0;margin-left:1.200px;margin-right:1.300px">°,</span><span style="color:#2383dc">0.0</span><span style="color:#a0a0a0;margin-left:1.200px;margin-right:1.300px">°,</span><span style="color:#2383dc">0.0</span><span style="color:#a0a0a0;margin-left:1.200px">°</span></span><span class="t vl" style="left:468px;top:646px"><span style="color:#2383dc">0</span><span style="color:#a0a0a0">x</span></span><span class="t vl" style="left:483px;top:646px"><span style="color:#2383dc">+101.0</span><span style="color:#a0a0a0;margin-left:1.200px">°</span></span><span class="t vl" style="left:468px;top:663px"><span style="color:#2383dc">0</span><span style="color:#a0a0a0;margin:0 2.500px 0 0.800px;position:relative;top:1px">x</span><span style="color:#2383dc">+0.0</span><span style="color:#a0a0a0;margin-left:1.200px">°</span></span><span class="t vl" style="left:468px;top:680px"><span style="color:#2383dc">0</span><span style="color:#a0a0a0;margin:0 2.500px 0 0.800px;position:relative;top:1px">x</span><span style="color:#2383dc">+0.0</span><span style="color:#a0a0a0;margin-left:1.200px">°</span></span><span class="t vl" style="left:468px;top:697px"><span style="color:#c0262c">100</span><span style="color:#a0a0a0;margin-left:1.500px">%</span></span><div class="a" style="left:477px;top:640px;width:51px;height:23px;border:3px solid #ee1620"></div>
<svg style="left:539px;top:638px" width="90" height="26"><path d="M5 13 L25 3 V11 H81 V15 H25 V23 Z" fill="#ee1620"/><path d="M63 13 h10 M63 13 l2.500 -2 M63 13 l2.500 2 M73 13 l-2.500 -2 M73 13 l-2.500 2" stroke="#f08a8a" stroke-width="0.800" fill="none"/></svg>
<div class="a" style="left:483px;top:711px;width:15px;height:16px;background:#1d1c1f"></div>
<svg style="left:480px;top:710px" width="72" height="18" viewBox="480 710 72 18" fill="none" stroke="#c0c0c0" stroke-width="1.100">
<path d="M485.500 716.500 h10 M485.500 720.500 h10" stroke="#2d8ceb" stroke-width="1.800"/>
<path d="M502.500 713 v10 h10 M503 721 l3 -4 l2 3 l3.500 -5"/>
<path d="M523.4 718.7 L523.4 718.9 L523.4 719.1 L523.5 719.4 L523.7 719.6 L524.0 719.7 L524.3 719.8 L524.7 719.8 L525.1 719.7 L525.5 719.4 L525.8 719.1 L526.0 718.6 L526.1 718.1 L526.0 717.6 L525.8 717.0 L525.5 716.5 L525.0 716.1 L524.3 715.8 L523.6 715.7 L522.9 715.7 L522.2 716.0 L521.5 716.4 L521.0 717.1 L520.6 717.8 L520.4 718.7 L520.5 719.7 L520.7 720.6 L521.3 721.4 L522.0 722.1 L522.9 722.6 L524.0 722.9 L525.1 722.8 L526.2 722.5 L527.2 721.9 L528.1 721.1 L528.7 720.0 L529.1 718.8 L529.1 717.5 L528.8 716.2 L528.2 715.0 L527.3 714.0" stroke-width="1.100"/>
<circle cx="541.500" cy="718.500" r="5.500" fill="#e4e4e4" stroke="none"/><path d="M539.800 715.500 v6 l4.500 -3 Z" fill="#1a1a1a" stroke="none"/>
</svg>

<!-- right pane -->
<div class="a" style="left:733px;top:560px;width:784.300px;height:286px;background:#232323"></div>
<div class="a" style="left:732px;top:560px;width:1px;height:286px;background:#0e0e0e"></div>
<!-- navigator -->
<div class="a" style="left:740px;top:560px;width:330px;height:9px;background:#676567"></div>
<div class="a" style="left:1076px;top:560px;width:435px;height:9px;background:#433f3a"></div>
<div class="a" style="left:1076px;top:560px;width:435px;height:1px;background:#5a4a30"></div>
<div class="a" style="left:1511px;top:560px;width:7px;height:9px;background:#2b2b2b;border-radius:0 5px 5px 0"></div>
<div class="a" style="left:732px;top:560px;width:8px;height:9px;background:#1b8fe8;border-radius:6px 0 0 6px"></div>
<div class="a" style="left:741px;top:560px;width:2px;height:9px;background:#8a888a"></div>
<div class="a" style="left:1069px;top:560px;width:7px;height:9px;background:#1b8fe8;border-radius:0 5px 5px 0"></div>
<!-- ruler -->
<div class="a" style="left:758px;top:583px;width:1px;height:5px;background:#9a9a9a"></div><span class="t" style="left:737px;top:571.800px;width:40px;text-align:center;font-size:10px;color:#bdbdbd;letter-spacing:-0.150px">20f</span><div class="a" style="left:847px;top:583px;width:1px;height:5px;background:#9a9a9a"></div><span class="t" style="left:826px;top:571.800px;width:40px;text-align:center;font-size:10px;color:#bdbdbd;letter-spacing:-0.150px">25f</span><div class="a" style="left:936px;top:583px;width:1px;height:5px;background:#9a9a9a"></div><span class="t" style="left:915px;top:571.800px;width:40px;text-align:center;font-size:10px;color:#bdbdbd;letter-spacing:-0.150px">04:00f</span><div class="a" style="left:1026px;top:583px;width:1px;height:5px;background:#9a9a9a"></div><span class="t" style="left:1005px;top:571.800px;width:40px;text-align:center;font-size:10px;color:#bdbdbd;letter-spacing:-0.150px">05f</span><div class="a" style="left:1115px;top:583px;width:1px;height:5px;background:#9a9a9a"></div><span class="t" style="left:1094px;top:571.800px;width:40px;text-align:center;font-size:10px;color:#bdbdbd;letter-spacing:-0.150px">10f</span><div class="a" style="left:1204px;top:583px;width:1px;height:5px;background:#9a9a9a"></div><span class="t" style="left:1183px;top:571.800px;width:40px;text-align:center;font-size:10px;color:#bdbdbd;letter-spacing:-0.150px">15f</span><div class="a" style="left:1294px;top:583px;width:1px;height:5px;background:#9a9a9a"></div><span class="t" style="left:1273px;top:571.800px;width:40px;text-align:center;font-size:10px;color:#bdbdbd;letter-spacing:-0.150px">20f</span><div class="a" style="left:1383px;top:583px;width:1px;height:5px;background:#9a9a9a"></div><span class="t" style="left:1362px;top:571.800px;width:40px;text-align:center;font-size:10px;color:#bdbdbd;letter-spacing:-0.150px">25f</span><div class="a" style="left:1472px;top:583px;width:1px;height:5px;background:#9a9a9a"></div><span class="t" style="left:1451px;top:571.800px;width:40px;text-align:center;font-size:10px;color:#bdbdbd;letter-spacing:-0.150px">05:00f</span>
<!-- work area -->
<div class="a" style="left:733px;top:588px;width:785px;height:1px;background:#111"></div>
<div class="a" style="left:740px;top:589px;width:777.300px;height:15px;background:#626062"></div>
<div class="a" style="left:733px;top:589px;width:7px;height:15px;background:#1b8fe8;border-radius:5px 0 0 5px"></div>
<div class="a" style="left:733px;top:604px;width:785px;height:1px;background:#111"></div>
<div class="a" style="left:733px;top:605px;width:785px;height:4px;background:#2b2a2d"></div>
<div class="a" style="left:740px;top:605px;width:18px;height:3px;background:#16c443"></div>
<!-- layer bar + rows -->
<div class="a" style="left:733px;top:609px;width:784.300px;height:234px;background:#363437"></div>
<div class="a" style="left:733px;top:609px;width:7px;height:236px;background:#2a292c"></div>
<div class="a" style="left:741px;top:609px;width:17px;height:234px;background:#4c4a4e"></div>
<div class="a" style="left:758px;top:609px;width:759.300px;height:16px;background:#797789"></div>
<div class="a" style="left:741px;top:609px;width:17px;height:16px;background:#838197"></div>
<div class="a" style="left:733px;top:625px;width:784.300px;height:1px;background:#29282a"></div><div class="a" style="left:733px;top:642px;width:784.300px;height:1px;background:#29282a"></div><div class="a" style="left:733px;top:659px;width:784.300px;height:1px;background:#29282a"></div><div class="a" style="left:733px;top:676px;width:784.300px;height:1px;background:#29282a"></div><div class="a" style="left:733px;top:693px;width:784.300px;height:1px;background:#29282a"></div><div class="a" style="left:733px;top:710px;width:784.300px;height:1px;background:#29282a"></div>
<div class="a" style="left:740px;top:842.800px;width:777.300px;height:2.200px;background:#6668a8"></div>
<div class="a" style="left:739px;top:586px;width:1px;height:259px;background:#0f4f94"></div><div class="a" style="left:740px;top:586px;width:1px;height:23px;background:#27507c"></div>
<div class="a" style="left:740.500px;top:609px;width:1px;height:236px;background:#8097b8"></div>
<svg style="left:733px;top:573px" width="14" height="16"><path d="M1.500 1 H12.500 V6.500 L7 14.500 L1.500 6.500 Z" fill="#1b8fe8"/><path d="M7 7 V15 M5 7 h4" stroke="#0b3a6e" stroke-width="1"/></svg>
<svg style="left:735px;top:628px" width="10" height="12" fill="none" stroke="#c8c8c8" stroke-width="1.300"><path d="M2 0.700 H8.500 M2 11.300 H8.500 M4.500 0.700 V11.300 M6 0.700 V11.300"/></svg><svg style="left:735px;top:645px" width="10" height="12" fill="none" stroke="#2d8ceb" stroke-width="1.300"><path d="M2 0.700 H8.500 M2 11.300 H8.500 M4.500 0.700 V11.300 M6 0.700 V11.300"/></svg><svg style="left:735px;top:662px" width="10" height="12" fill="none" stroke="#c8c8c8" stroke-width="1.300"><path d="M2 0.700 H8.500 M2 11.300 H8.500 M4.500 0.700 V11.300 M6 0.700 V11.300"/></svg><svg style="left:735px;top:679px" width="10" height="12" fill="none" stroke="#c8c8c8" stroke-width="1.300"><path d="M2 0.700 H8.500 M2 11.300 H8.500 M4.500 0.700 V11.300 M6 0.700 V11.300"/></svg><svg style="left:735px;top:696px" width="10" height="12" fill="none" stroke="#c8c8c8" stroke-width="1.300"><path d="M2 0.700 H8.500 M2 11.300 H8.500 M4.500 0.700 V11.300 M6 0.700 V11.300"/></svg>
<span class="t" style="left:736px;top:714px;font-size:11.500px;color:#a4a4a6;letter-spacing:0.050px">toCompVec([0, 0, 1])[2]</span>
<!-- right scrollbar col -->
<div class="a" style="left:1517.300px;top:560px;width:15.300px;height:286px;background:#232323"></div>
<div class="a" style="left:1518px;top:608px;width:15px;height:1px;background:#111"></div>
<svg style="left:1520px;top:590px" width="13" height="16"><path d="M1 1 H12 V9.500 L6.500 14.500 L1 9.500 Z" fill="#bdbdbd"/></svg>
<svg style="left:1518px;top:610px" width="15" height="15" fill="none" stroke="#c8c8c8" stroke-width="1.300"><path d="M7.500 4.500 h7 v6.500 h-4" fill="#c8c8c8" stroke="none"/><path d="M7.500 2 L1 10 H5"/><circle cx="7.500" cy="10.500" r="2.500" fill="#232323"/></svg>
<div class="a" style="left:1518.500px;top:627px;width:13.500px;height:190px;background:#2e2e30;border-radius:7px"></div>
<!-- UM logo -->
<div class="a" style="left:1485.800px;top:813px;width:31.600px;height:31.800px;background:#c9c6c4"></div>
<div class="a" style="left:1490.700px;top:814px;width:22px;height:22px;background:#cf5a3c;border-radius:11px"></div>
<span class="t" style="left:1493.300px;top:813px;font-size:21px;font-weight:bold;color:#fff;letter-spacing:-0.500px;transform:scaleX(0.560);transform-origin:0 0">um</span>
<span class="t" style="left:1487px;top:837.500px;font-size:6.500px;font-weight:bold;color:#cf5a3c;letter-spacing:-0.300px;transform:scaleX(0.800);transform-origin:0 0">SUBSCRIBE</span>
<!-- bottom bar -->
<div class="a" style="left:3px;top:846px;width:1529px;height:14px;background:#212121"></div>
<div class="a" style="left:2px;top:845px;width:731px;height:1px;background:#151515"></div>
<svg style="left:0;top:846px" width="60" height="15" viewBox="0 846 60 15" fill="none" stroke="#c0c0c0" stroke-width="1.100">
<g stroke="#2d8ceb"><path d="M8.500 848.500 h5 v2 M8.500 848.500 v6 h2 M10.500 850.500 h5 v2 M10.500 850.500 v6 h2"/><rect x="12.500" y="852.500" width="5.500" height="6" fill="#0e4f94"/></g>
<circle cx="31" cy="851.500" r="3.500"/><rect x="31.500" y="852.500" width="5.500" height="5.500" fill="#222"/><path d="M32 858 l5 -5" />
<path d="M47 848.500 h5 v10 h-5 Z" fill="#8a8a8a" stroke="none"/><path d="M47.500 848.500 v3.500 l-2.500 1.500 l2.500 1.500 v3.500 M51.500 848.500 v3.500 l2.500 1.500 l-2.500 1.500 v3.500" stroke-width="1.300"/>
</svg>
<div class="a" style="left:465px;top:847px;width:133px;height:14px;border:1px solid #343434;border-radius:2px;background:#242424"></div>
<span class="t" style="left:475px;top:849px;font-size:10px;color:#b0b0b0">Toggle Switches / Modes</span>
<svg style="left:735px;top:846px" width="110" height="15" viewBox="735 846 110 15" fill="#c8c8c8">
<path d="M738.500 855.500 l3 -3 l1.500 1.500 l2 -3 l3.500 4.500 Z"/>
<rect x="764" y="853" width="43" height="1.500" fill="#444"/><circle cx="793" cy="854.500" r="4.300" fill="#222" stroke="#c0c0c0" stroke-width="1.500"/>
<path d="M818.500 857 l4.500 -5 h1.500 l-3.500 5 Z M823 857 l6.500 -7.500 l6 7.500 Z"/>
</svg>
<div class="a" style="left:841px;top:847px;width:288px;height:14px;border-radius:7px;background:#2e2e2e"></div>
</div>
</body></html>
